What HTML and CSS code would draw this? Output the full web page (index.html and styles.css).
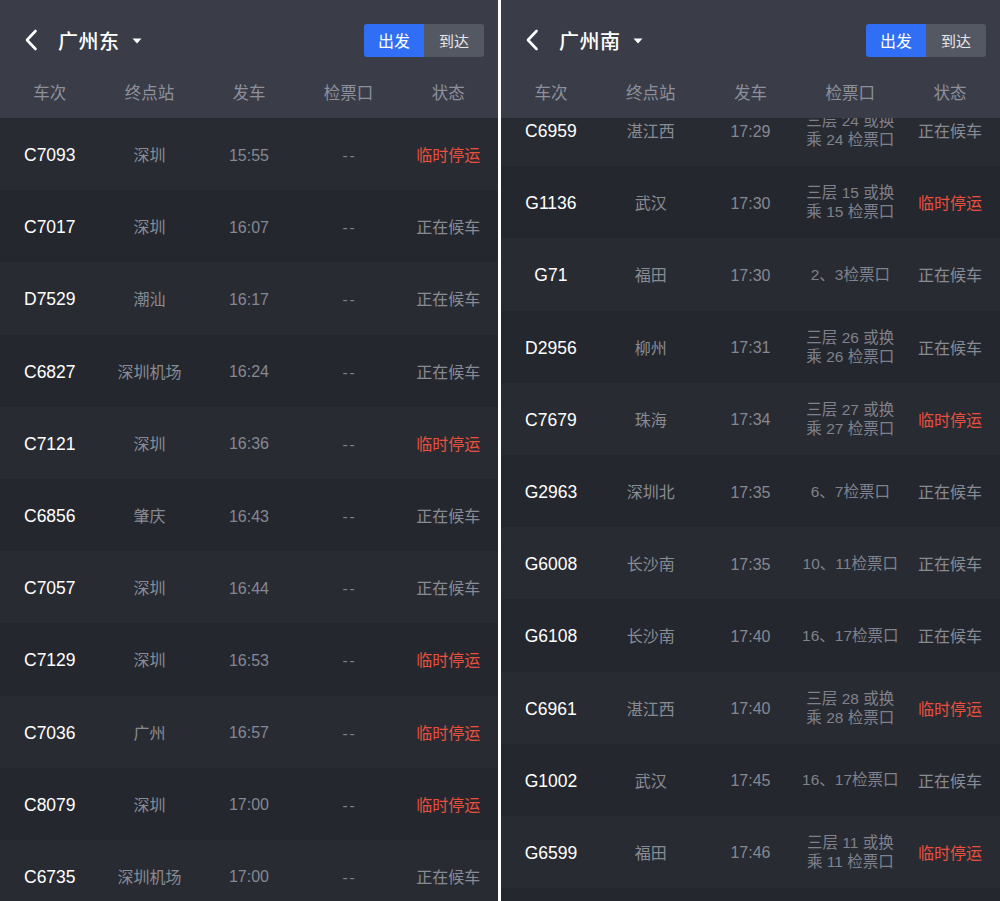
FILE: index.html
```html
<!DOCTYPE html>
<html lang="zh-CN">
<head>
  <meta charset="UTF-8">
  <title>车站大屏</title>
  <link rel="stylesheet" href="styles.css">
</head>
<body>
  <div class="screens">
    <section class="screen">
      <header class="topbar">
        <div class="nav">
          <svg class="back" width="14" height="22" viewBox="0 0 14 22"><path d="M11.5 2 L3 11 L11.5 20" fill="none" stroke="#fff" stroke-width="2.6" stroke-linecap="round" stroke-linejoin="round"/></svg>
          <span class="station">广州东</span>
          <svg class="caret" width="10" height="6" viewBox="0 0 10 6"><path d="M0.5 0.5 H9.5 L5 5.5 Z" fill="#fff"/></svg>
          <div class="seg">
            <span class="seg-item active">出发</span>
            <span class="seg-item">到达</span>
          </div>
        </div>
        <div class="cols">
          <span>车次</span><span>终点站</span><span>发车</span><span>检票口</span><span>状态</span>
        </div>
      </header>
      <div class="list">
        <div class="row"><span class="no">C7093</span><span>深圳</span><span class="time">15:55</span><span class="gate none">--</span><span class="stop">临时停运</span></div>
        <div class="row"><span class="no">C7017</span><span>深圳</span><span class="time">16:07</span><span class="gate none">--</span><span>正在候车</span></div>
        <div class="row"><span class="no">D7529</span><span>潮汕</span><span class="time">16:17</span><span class="gate none">--</span><span>正在候车</span></div>
        <div class="row"><span class="no">C6827</span><span>深圳机场</span><span class="time">16:24</span><span class="gate none">--</span><span>正在候车</span></div>
        <div class="row"><span class="no">C7121</span><span>深圳</span><span class="time">16:36</span><span class="gate none">--</span><span class="stop">临时停运</span></div>
        <div class="row"><span class="no">C6856</span><span>肇庆</span><span class="time">16:43</span><span class="gate none">--</span><span>正在候车</span></div>
        <div class="row"><span class="no">C7057</span><span>深圳</span><span class="time">16:44</span><span class="gate none">--</span><span>正在候车</span></div>
        <div class="row"><span class="no">C7129</span><span>深圳</span><span class="time">16:53</span><span class="gate none">--</span><span class="stop">临时停运</span></div>
        <div class="row"><span class="no">C7036</span><span>广州</span><span class="time">16:57</span><span class="gate none">--</span><span class="stop">临时停运</span></div>
        <div class="row"><span class="no">C8079</span><span>深圳</span><span class="time">17:00</span><span class="gate none">--</span><span class="stop">临时停运</span></div>
        <div class="row"><span class="no">C6735</span><span>深圳机场</span><span class="time">17:00</span><span class="gate none">--</span><span>正在候车</span></div>
      </div>
    </section>

    <div class="divider"></div>

    <section class="screen">
      <header class="topbar">
        <div class="nav">
          <svg class="back" width="14" height="22" viewBox="0 0 14 22"><path d="M11.5 2 L3 11 L11.5 20" fill="none" stroke="#fff" stroke-width="2.6" stroke-linecap="round" stroke-linejoin="round"/></svg>
          <span class="station">广州南</span>
          <svg class="caret" width="10" height="6" viewBox="0 0 10 6"><path d="M0.5 0.5 H9.5 L5 5.5 Z" fill="#fff"/></svg>
          <div class="seg">
            <span class="seg-item active">出发</span>
            <span class="seg-item">到达</span>
          </div>
        </div>
        <div class="cols">
          <span>车次</span><span>终点站</span><span>发车</span><span>检票口</span><span>状态</span>
        </div>
      </header>
      <div class="list">
        <div class="rows scrolled">
          <div class="row"><span class="no">C6959</span><span>湛江西</span><span class="time">17:29</span><span class="gate">三层 24 或换<br>乘 24 检票口</span><span>正在候车</span></div>
          <div class="row"><span class="no">G1136</span><span>武汉</span><span class="time">17:30</span><span class="gate">三层 15 或换<br>乘 15 检票口</span><span class="stop">临时停运</span></div>
          <div class="row"><span class="no">G71</span><span>福田</span><span class="time">17:30</span><span class="gate">2、3检票口</span><span>正在候车</span></div>
          <div class="row"><span class="no">D2956</span><span>柳州</span><span class="time">17:31</span><span class="gate">三层 26 或换<br>乘 26 检票口</span><span>正在候车</span></div>
          <div class="row"><span class="no">C7679</span><span>珠海</span><span class="time">17:34</span><span class="gate">三层 27 或换<br>乘 27 检票口</span><span class="stop">临时停运</span></div>
          <div class="row"><span class="no">G2963</span><span>深圳北</span><span class="time">17:35</span><span class="gate">6、7检票口</span><span>正在候车</span></div>
          <div class="row"><span class="no">G6008</span><span>长沙南</span><span class="time">17:35</span><span class="gate">10、11检票口</span><span>正在候车</span></div>
          <div class="row"><span class="no">G6108</span><span>长沙南</span><span class="time">17:40</span><span class="gate">16、17检票口</span><span>正在候车</span></div>
          <div class="row"><span class="no">C6961</span><span>湛江西</span><span class="time">17:40</span><span class="gate">三层 28 或换<br>乘 28 检票口</span><span class="stop">临时停运</span></div>
          <div class="row"><span class="no">G1002</span><span>武汉</span><span class="time">17:45</span><span class="gate">16、17检票口</span><span>正在候车</span></div>
          <div class="row"><span class="no">G6599</span><span>福田</span><span class="time">17:46</span><span class="gate">三层 11 或换<br>乘 11 检票口</span><span class="stop">临时停运</span></div>
          <div class="row"></div>
        </div>
      </div>
    </section>
  </div>
</body>
</html>
```

FILE: styles.css
```css
body { margin: 0; background: #fff; font-family: "Liberation Sans", "Noto Sans CJK SC", sans-serif; }
.screens { display: flex; height: 901px; overflow: hidden; }
.divider { width: 3px; background: #fff; flex: none; }
.screen { display: flex; flex-direction: column; background: #25272e; overflow: hidden; }
.screen:first-child { width: 498px; }
.screen:last-child { width: 499px; }

.topbar { background: #3a3d48; height: 118px; flex: none; position: relative; z-index: 1; }
.nav { height: 80px; display: flex; align-items: center; padding: 0 14px 0 24px; }
.back { flex: none; }
.station { color: #fff; font-size: 20px; font-weight: 500; margin-left: 20px; letter-spacing: 0.5px; }
.caret { margin-left: 12px; margin-top: 1px; }
.seg { margin-left: auto; display: flex; height: 33px; border-radius: 3px; overflow: hidden; }
.seg-item { width: 60px; display: flex; align-items: center; justify-content: center; background: #545863; color: #e6e7ea; font-size: 15px; }
.seg-item.active { background: #2f6ef5; color: #fff; font-size: 16px; }

.cols { display: grid; grid-template-columns: repeat(5, 1fr); line-height: 24px; padding-top: 1px; color: #8d909b; font-size: 16.5px; text-align: center; }

.list { flex: 1; overflow: hidden; }
.rows.scrolled { margin-top: -24px; }
.row { display: grid; grid-template-columns: repeat(5, 1fr); align-items: center; height: 72.2px; text-align: center; color: #888b94; font-size: 16px; background: #292b32; }
.row:nth-child(even) { background: #25272e; }
.row .no { color: #fff; font-size: 17.5px; padding-top: 3px; }
.row .time { color: #858892; padding-top: 3px; }
.row .gate { color: #7f828c; font-size: 15.5px; line-height: 19px; white-space: nowrap; }
.row .gate.none { letter-spacing: 2px; padding: 3px 0 0 2px; }
.row .stop { color: #e9503e; }
```
